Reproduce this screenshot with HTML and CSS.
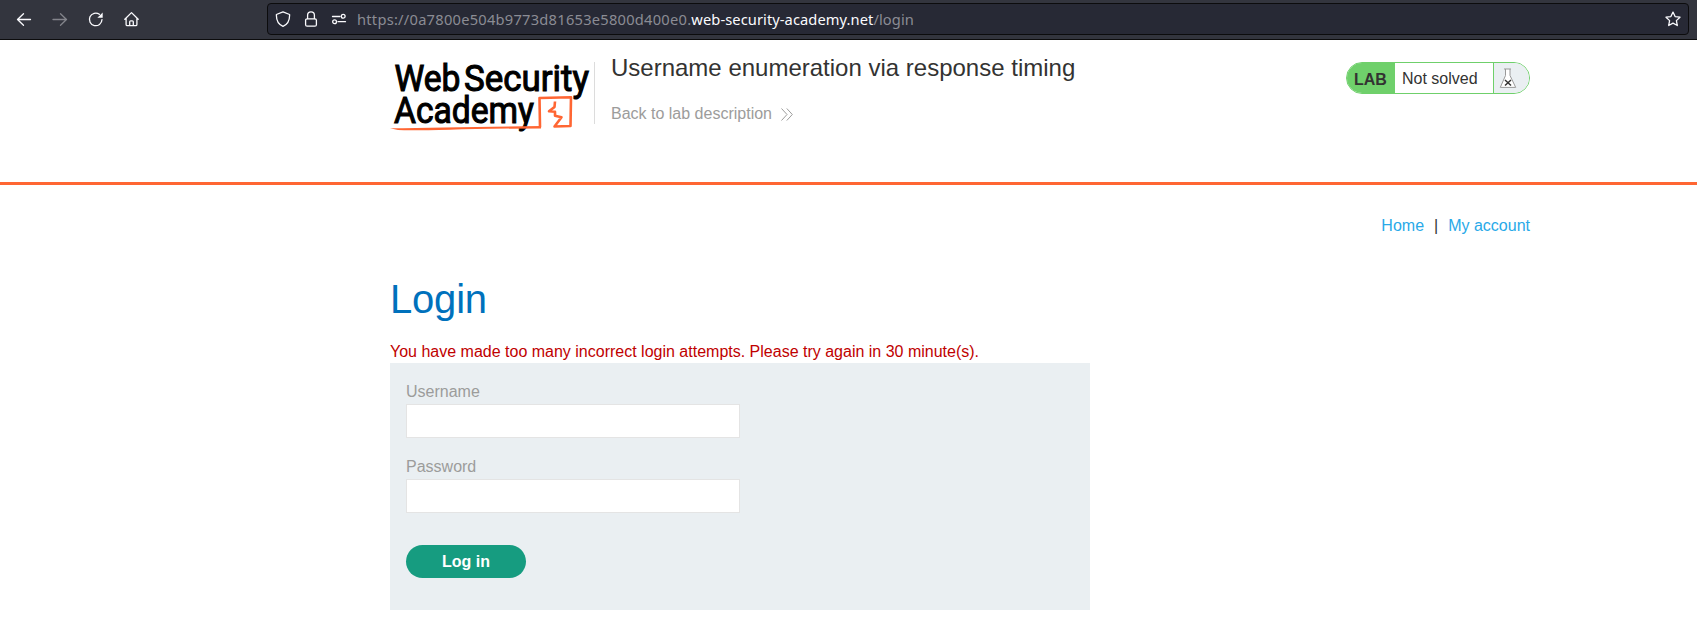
FILE: index.html
```html
<!DOCTYPE html>
<html lang="en">
<head>
<meta charset="utf-8">
<title>Username enumeration via response timing</title>
<link rel="stylesheet" href="styles.css">
</head>
<body>
<div class="toolbar">
  <div class="nav-buttons">
    <svg class="tool-icon" viewBox="0 0 16 16"><path d="M14.500 8.500H1.500M7.500 2.800L1.500 8.500l6 5.700"/></svg>
    <svg class="tool-icon dim" viewBox="0 0 16 16"><path d="M1 8.500h13.500M8.500 2.800l6 5.700-6 5.700"/></svg>
    <svg class="tool-icon" viewBox="0 0 16 16"><path d="M14 8.600A6.300 6.300 0 1 1 11.400 3.300"/><path class="solid" d="M14.700 1.500v5.300H9.400z"/></svg>
    <svg class="tool-icon" viewBox="0 0 16 16"><path d="M.8 8.300L7.500 1.600l6.700 6.700M2.100 7.200v6.200q0 1.200 1.200 1.200h8.400q1.200 0 1.200-1.200V7.200M5.700 14.400v-3.600q0-1 1-1h1.600q1 0 1 1v3.600"/></svg>
  </div>
  <div class="url-bar">
    <svg class="tool-icon" viewBox="0 0 16 16"><path d="M8 .9l6.600 2.600c.2 5.500-2 10-6.600 11.900C3.400 13.500 1.200 9 1.400 3.500z"/></svg>
    <svg class="tool-icon" viewBox="0 0 16 16"><rect x="2.600" y="7.800" width="10.800" height="7.400" rx="1.500"/><path d="M4.600 7.500V4.200a3.400 3.400 0 0 1 6.800 0v3.300"/></svg>
    <svg class="tool-icon" viewBox="0 0 16 16"><path d="M1.500 5.500H9M7 10.700h7.500"/><circle cx="12.200" cy="5.200" r="1.900"/><circle cx="3.600" cy="10.700" r="1.900"/></svg>
    <div class="url">https://0a7800e504b9773d81653e5800d400e0.<b>web-security-academy.net</b><span class="path">/login</span></div>
    <svg class="tool-icon star" viewBox="0 0 16 16"><path d="M8 1.100l2.100 4.500 4.900.6-3.600 3.400.9 4.900L8 12.100l-4.300 2.400.9-4.900L1 6.200l4.900-.6z"/></svg>
  </div>
</div>
<header class="lab-header">
  <svg class="logo" viewBox="0 0 204 80">
    <g class="logo-text">
      <text x="4.500" y="35.800" textLength="66" lengthAdjust="spacingAndGlyphs">Web</text>
      <text x="74" y="35.800" textLength="125" lengthAdjust="spacingAndGlyphs">Security</text>
      <text x="4" y="68.300" textLength="140" lengthAdjust="spacingAndGlyphs">Academy</text>
    </g>
    <path class="underline" d="M0 73.300Q60 72.300 151 71V73.400Q90 73.700 60 74.700Q20 75.600 8 75Z"/>
    <path class="mark" d="M150 72.300L149.500 43 181 42.300 180.500 71 164.500 71.500 171.500 62.300 165 60.800 165 56.800 159 56.300 164.500 52 165 46.500"/>
  </svg>
  <div class="divider"></div>
  <div class="title-block">
    <h2>Username enumeration via response timing</h2>
    <a class="back">Back to lab description
      <svg viewBox="0 0 12 13"><path d="M.5.500l5.500 6-5.500 6M5.800.500l5.500 6-5.500 6"/></svg>
    </a>
  </div>
  <div class="badge">
    <span class="lab">LAB</span>
    <span class="status">Not solved</span>
    <span class="flask"><svg viewBox="0 0 18 21"><path d="M5 1h7M6.500 1v6.500L1.300 19.400h15.400L11 7.500V1"/><path class="cross" d="M6 12l6 5.500M12 12l-6 5.500"/></svg></span>
  </div>
</header>
<main>
  <nav><a>Home</a><span>|</span><a>My account</a></nav>
  <h1>Login</h1>
  <p class="warning">You have made too many incorrect login attempts. Please try again in 30 minute(s).</p>
  <form>
    <label>Username</label>
    <input type="text">
    <label>Password</label>
    <input type="password">
    <button type="button">Log in</button>
  </form>
</main>
</body>
</html>
```
FILE: styles.css
```css
* { box-sizing: border-box; }
body {
  margin: 0;
  height: 619px;
  overflow: hidden;
  background: #fff;
  color: #333332;
  font: 16px/20px "Liberation Sans", Arial, sans-serif;
}
.toolbar {
  display: flex;
  height: 40px;
  padding: 3px 8px 0 16px;
  background: #33353e;
  border-bottom: 1px solid #0c0c0d;
}
.nav-buttons {
  display: flex;
  gap: 20px;
  width: 251px;
  padding-top: 8px;
}
.tool-icon {
  flex: none;
  width: 16px;
  height: 16px;
  fill: none;
  stroke: #fbfbfe;
  stroke-width: 1.3;
  stroke-linecap: round;
  stroke-linejoin: round;
}
.tool-icon.dim { opacity: .4; }
.tool-icon .solid { fill: #fbfbfe; stroke: none; }
.url-bar {
  display: flex;
  flex: 1;
  align-items: center;
  gap: 12px;
  height: 32px;
  padding: 0 7px;
  background: #272935;
  border: 1px solid #0c0c0d;
  border-radius: 4px;
}
.url {
  flex: 1;
  margin-left: -2px;
  color: #8b8c94;
  font: 14.67px/20px "Noto Sans", sans-serif;
  letter-spacing: .25px;
  white-space: nowrap;
}
.url b { color: #fbfbfe; font-weight: 400; letter-spacing: .08px; }
.url .path { letter-spacing: .1px; }
.lab-header {
  display: flex;
  align-items: flex-start;
  height: 145px;
  padding: 15px 0 0 390px;
  border-bottom: 3px solid #ff6633;
}
.logo { width: 204px; height: 80px; overflow: visible; }
.logo-text { fill: #000; stroke: #000; stroke-width: 1.1; font: 400 37.5px Roboto, sans-serif; }
.underline { fill: #ff6633; }
.mark { fill: none; stroke: #ff6633; stroke-width: 2.6; stroke-linejoin: round; }
.divider { width: 1px; height: 62px; margin-top: 7px; background: #dcdcdc; }
.title-block { width: 751px; padding-left: 16px; }
h2 { margin: 0; font-size: 24px; line-height: 26px; font-weight: 400; }
.back { display: flex; align-items: center; gap: 9px; margin-top: 23px; color: #9c9c9b; }
.back svg { width: 12px; height: 13px; fill: none; stroke: #9c9c9b; stroke-width: 1; }
.badge {
  display: flex;
  width: 184px;
  height: 32px;
  margin-top: 7px;
  overflow: hidden;
  border: 1px solid #6fd06b;
  border-radius: 16px;
  line-height: 30px;
}
.lab { width: 48px; padding: 2px 0 0 7px; background: #6fd06b; font-weight: 700; }
.status { width: 98px; padding: 1px 0 0 7px; }
.flask { flex: 1; padding: 5px 0 0 5px; background: #eaeff2; border-left: 1px solid #6fd06b; }
.flask svg { display: block; width: 18px; height: 21px; fill: #fff; stroke: #999; }
.flask .cross { stroke: #333332; stroke-width: 1.5; }
main { width: 1140px; margin-left: 390px; padding-top: 31px; }
nav { display: flex; justify-content: flex-end; gap: 10px; }
nav a { color: #29a9e8; }
h1 { margin: 40px 0 0; color: #0071bc; font-size: 40px; line-height: 46px; font-weight: 400; letter-spacing: -.2px; }
.warning { margin: 20px 0 0; color: #c00000; line-height: 20px; }
form {
  display: flex;
  flex-direction: column;
  align-items: flex-start;
  width: 700px;
  height: 247px;
  margin-top: 1px;
  padding: 19px 16px;
  background: #eaeff2;
}
label { color: #9c9c9b; line-height: 20px; }
input {
  width: 334px;
  height: 34px;
  margin: 2px 0 19px;
  background: #fff;
  border: 1px solid #e4e4e4;
}
button {
  width: 120px;
  height: 33px;
  margin-top: 13px;
  padding: 0;
  background: #169c80;
  border: 0;
  border-radius: 17px;
  color: #fff;
  font: 700 16px "Liberation Sans", Arial, sans-serif;
}
```
